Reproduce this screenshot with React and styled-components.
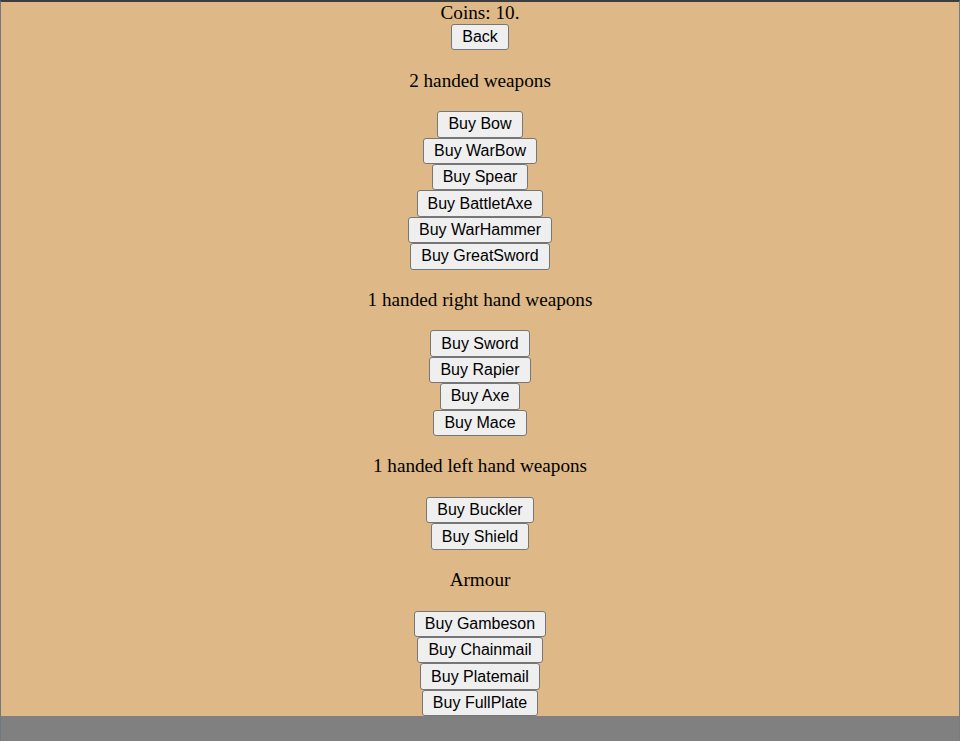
import React from "react";
import styled, { createGlobalStyle } from "styled-components";

const GlobalStyle = createGlobalStyle`
  html, body {
    margin: 0;
    padding: 0;
    background: #808080;
  }
  body {
    font-family: "Liberation Serif", "Times New Roman", serif;
  }
`;

const shop = [
  {
    title: "2 handed weapons",
    items: ["Bow", "WarBow", "Spear", "BattletAxe", "WarHammer", "GreatSword"],
  },
  {
    title: "1 handed right hand weapons",
    items: ["Sword", "Rapier", "Axe", "Mace"],
  },
  {
    title: "1 handed left hand weapons",
    items: ["Buckler", "Shield"],
  },
  {
    title: "Armour",
    items: ["Gambeson", "Chainmail", "Platemail", "FullPlate"],
  },
];

function App() {
  return (
    <>
      <GlobalStyle />
      <Frame>
        <Shop>
          <Coins>Coins: 10.</Coins>
          <ShopButton>Back</ShopButton>
          {shop.map((group) => (
            <Group key={group.title}>
              <Heading>{group.title}</Heading>
              {group.items.map((item) => (
                <ShopButton key={item}>Buy {item}</ShopButton>
              ))}
            </Group>
          ))}
        </Shop>
      </Frame>
    </>
  );
}

export default App;

const Frame = styled.div`
  min-height: 741px;
  box-sizing: border-box;
  border-top: 2px solid #3d3d3d;
  border-left: 1px solid #6e7981;
  border-right: 1px solid #7a7a7a;
`;

const Shop = styled.div`
  background: #deb887;
  display: flex;
  flex-direction: column;
  align-items: center;
  color: #000;
  font-size: 19.2px;
`;

const Coins = styled.div`
  line-height: 22px;
`;

const Group = styled.div`
  display: flex;
  flex-direction: column;
  align-items: center;
`;

const Heading = styled.p`
  margin: 19.2px 0;
  line-height: 22.5px;
`;

const ShopButton = styled.button`
  height: 26.4px;
  box-sizing: border-box;
  padding: 0 10px;
  font-family: "Liberation Sans", Arial, sans-serif;
  font-size: 16px;
  color: #000;
  background: #efefef;
  border: 1px solid #767676;
  border-radius: 3px;
  cursor: pointer;

  &:hover {
    background: #e5e5e5;
  }
`;
